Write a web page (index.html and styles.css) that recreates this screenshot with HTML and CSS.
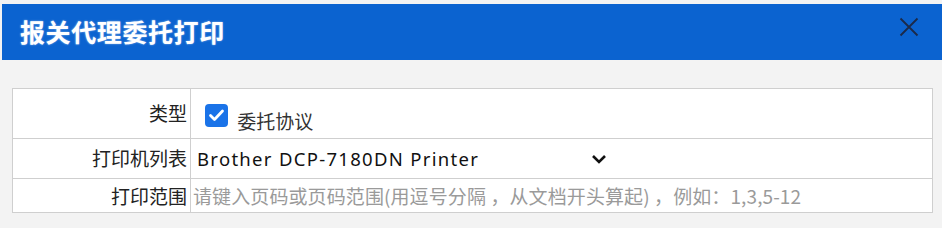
FILE: index.html
```html
<!DOCTYPE html>
<html lang="zh">
<head>
<meta charset="utf-8">
<link rel="stylesheet" href="styles.css">
</head>
<body>
<div class="dialog">
  <div class="header">
    <span class="title">报关代理委托打印</span>
    <span class="close"><svg width="20" height="20" viewBox="0 0 20 20"><path d="M1.5 1.5 L18.5 18.5 M18.5 1.5 L1.5 18.5" stroke="#1b2a4a" stroke-width="1.8" fill="none"/></svg></span>
  </div>
  <div class="content">
    <table class="form">
      <tr class="row-type">
        <td class="label">类型</td>
        <td class="value">
          <span class="check"><svg width="23" height="23" viewBox="0 0 23 23"><rect x="0" y="0" width="23" height="23" rx="4" fill="#1a73e8"/><path d="M5.5 11.5 L9.5 15.5 L17.5 7" stroke="#fff" stroke-width="2.8" fill="none" stroke-linecap="round" stroke-linejoin="round"/></svg></span>
          <span class="check-label">委托协议</span>
        </td>
      </tr>
      <tr class="row-printer">
        <td class="label">打印机列表</td>
        <td class="value">
          <div class="select">
            <span class="select-text">Brother DCP-7180DN Printer</span>
            <svg class="chev" width="16" height="10" viewBox="0 0 16 10"><path d="M2 2 L8 8 L14 2" stroke="#111" stroke-width="2.6" fill="none"/></svg>
          </div>
        </td>
      </tr>
      <tr class="row-range">
        <td class="label">打印范围</td>
        <td class="value"><span class="placeholder">请键入页码或页码范围(用逗号分隔 ，从文档开头算起) ，例如：1,3,5-12</span></td>
      </tr>
    </table>
  </div>
</div>
</body>
</html>
```

FILE: styles.css
```css
html, body {
  margin: 0;
  padding: 0;
  background: #ffffff;
}
body {
  font-family: "Noto Sans", "Noto Sans CJK SC", sans-serif;
}
.dialog {
  width: 942px;
  height: 228px;
  padding-top: 4px;
  box-sizing: border-box;
  background: #f3f3f3;
}
.header {
  margin-left: 2px;
  height: 56px;
  background: #0b63d0;
  display: flex;
  align-items: center;
  justify-content: space-between;
  padding: 0 23px 0 18px;
}
.title {
  color: #ffffff;
  font-family: "Noto Sans CJK SC", sans-serif;
  font-weight: 700;
  font-size: 25px;
  letter-spacing: 0.6px;
  text-shadow: 0 0 2px rgba(255,255,255,0.6);
  margin-top: -2px;
}
.close {
  display: flex;
  width: 20px;
  height: 20px;
  align-self: flex-start;
  margin-top: 13px;
}
.content {
  padding: 28px 9px 0 12px;
}
.form {
  border-collapse: collapse;
  width: 921px;
  background: #ffffff;
}
.form td {
  border: 1px solid #cfcfcf;
  padding: 0;
}
.label {
  width: 178px;
  text-align: right;
  font-size: 19px;
  color: #222;
  padding-right: 3px !important;
  box-sizing: border-box;
  font-family: "Noto Sans CJK SC", sans-serif;
}
.row-type { height: 50px; }
.row-type .label { vertical-align: top; padding-top: 10px !important; }
.row-type .value { vertical-align: top; padding: 15px 0 0 14px !important; }
.row-printer { height: 40px; }
.row-printer .label { padding-bottom: 2px !important; }
.row-range { height: 34px; }
.check {
  display: inline-block;
  width: 23px;
  height: 23px;
  vertical-align: top;
}
.check-label {
  display: inline-block;
  font-size: 19px;
  color: #333;
  margin-left: 5px;
  margin-top: 5px;
  font-family: "Noto Sans CJK SC", sans-serif;
  vertical-align: top;
  line-height: 24px;
}
.select {
  display: flex;
  align-items: center;
  width: 410px;
  padding-left: 6px;
  justify-content: space-between;
}
.select-text {
  font-family: "Noto Sans", sans-serif;
  font-size: 18.5px;
  letter-spacing: 1.3px;
  color: #111;
}
.chev {
  display: block;
}
.placeholder {
  font-size: 19px;
  color: #9a9a9a;
  font-family: "Noto Sans CJK SC", sans-serif;
  padding-left: 2px;
  letter-spacing: 0.1px;
}
```
